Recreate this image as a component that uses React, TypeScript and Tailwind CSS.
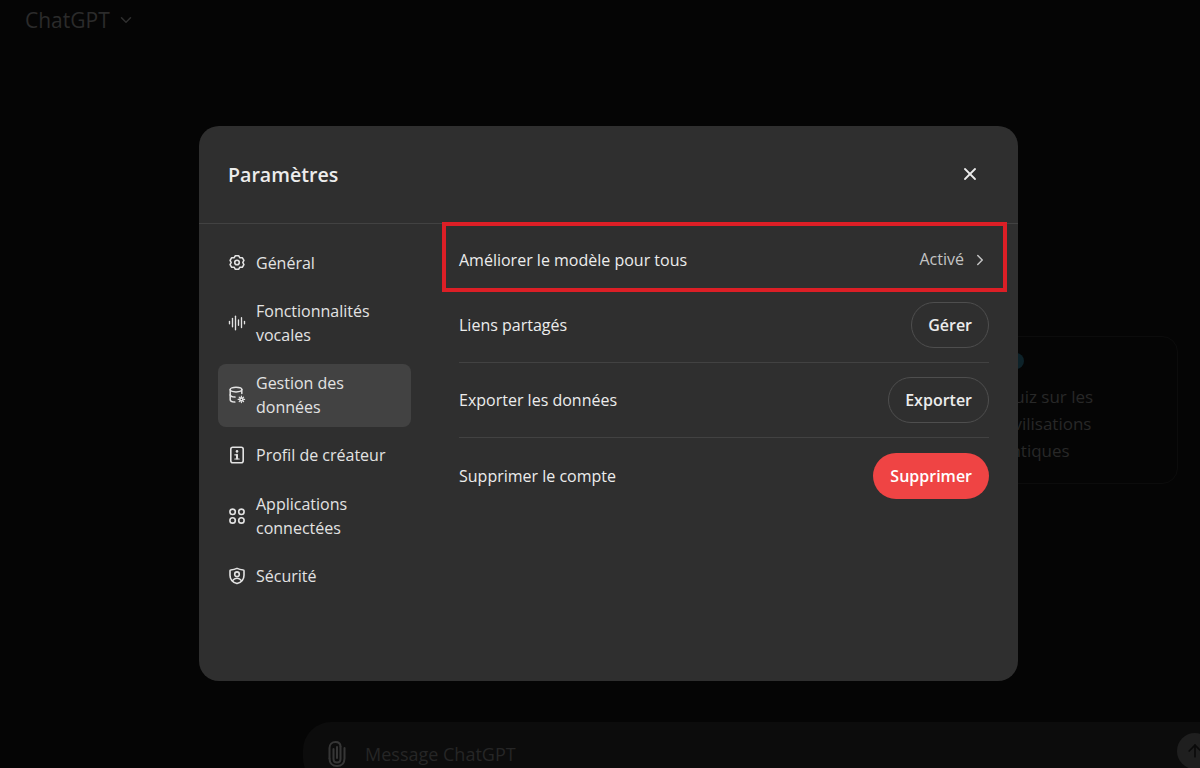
import React from "react";
import { ChevronDown, ChevronRight, ArrowUp, X, AudioLines } from "lucide-react";

const GearIcon = () => (
  <svg width="18" height="18" viewBox="0 0 18 18" fill="none" stroke="currentColor" strokeWidth="1.6" strokeLinejoin="round">
    <path d="M7.4 1.700h3.200l1.300 2.100 2.400-.100 1.600 2.700-1.100 2.100 1.100 2.100-1.600 2.700-2.400-.100-1.300 2.100H7.400l-1.300-2.100-2.400.100-1.600-2.700L3.200 8.500 2.100 6.400l1.600-2.700 2.400.100z" />
    <circle cx="9" cy="8.500" r="2.300" />
  </svg>
);

const DataIcon = () => (
  <svg width="18" height="18" viewBox="0 0 18 18" fill="none" stroke="currentColor" strokeWidth="1.5" strokeLinecap="round">
    <ellipse cx="8" cy="3.600" rx="5.800" ry="2.300" />
    <path d="M2.200 3.600v10.200c0 1.300 2 2.200 4.600 2.300" />
    <path d="M13.800 3.600v4" />
    <path d="M2.200 8.800c0 1.200 2 2.200 4.800 2.300" />
    <circle cx="13.400" cy="13.400" r="2.300" fill="currentColor" stroke="none" />
    <path d="M13.400 10.200v.8M13.400 15.800v.8M10.200 13.400h.8M15.800 13.400h.8M11.200 11.200l.5.5M15.100 15.100l.5.5M15.600 11.200l-.5.5M11.700 15.100l-.5.5" strokeWidth="1.200" />
    <circle cx="13.400" cy="13.400" r="0.700" fill="#424242" stroke="none" />
  </svg>
);

const ProfileIcon = () => (
  <svg width="18" height="18" viewBox="0 0 18 18" fill="none" stroke="currentColor" strokeWidth="1.600" strokeLinecap="round">
    <rect x="2.800" y="1.200" width="12.400" height="15.600" rx="2" />
    <circle cx="9" cy="5.400" r="1.300" fill="currentColor" stroke="none" />
    <path d="M9 8.800v3.800" strokeWidth="2" />
    <path d="M6.800 8.800h1.600M6.800 13h4.400" strokeWidth="1.200" />
  </svg>
);

const AppsIcon = () => (
  <svg width="18" height="18" viewBox="0 0 18 18" fill="none" stroke="currentColor" strokeWidth="1.600">
    <circle cx="4.600" cy="4.800" r="2.700" />
    <circle cx="13.400" cy="4.800" r="2.700" />
    <circle cx="4.600" cy="13.400" r="2.700" />
    <circle cx="13.400" cy="13.400" r="2.700" />
  </svg>
);

const ShieldIcon = () => (
  <svg width="18" height="18" viewBox="0 0 18 18" fill="none" stroke="currentColor" strokeWidth="1.600" strokeLinecap="round">
    <path d="M9 1.400c2 1 4 1.400 6.400 1.600.4 0 .6.300.6.700v4.600c0 4.200-3 7.200-7 8.300-4-1.100-7-4.100-7-8.300V3.700c0-.4.200-.7.600-.7C5 2.800 7 2.400 9 1.400z" />
    <circle cx="9" cy="7.200" r="2.300" />
    <path d="M4.800 13.400c1-1.500 2.500-2.200 4.200-2.200s3.200.7 4.200 2.200" />
  </svg>
);

const ClipIcon = () => (
  <svg width="18" height="26" viewBox="0 0 18 26" fill="none" stroke="currentColor" strokeWidth="2" strokeLinecap="round" className="text-[#363636]">
    <path d="M5.500 8v10c0 2 1.500 3.500 3.500 3.500s3.500-1.500 3.500-3.500V5.500" />
    <path d="M1.500 17.500c0 4.500 3 7.500 7.500 7.500s7.500-3 7.500-7.500V7" />
    <path d="M1.500 17.500V7c0-3.500 2.500-6 6-6s5 2 5 4.500" />
    <path d="M9 6v11" />
  </svg>
);

const navItems = [
  { label: ["Général"], icon: <GearIcon /> },
  { label: ["Fonctionnalités", "vocales"], icon: <AudioLines size={18} strokeWidth={1.8} /> },
  { label: ["Gestion des", "données"], icon: <DataIcon />, active: true },
  { label: ["Profil de créateur"], icon: <ProfileIcon /> },
  { label: ["Applications", "connectées"], icon: <AppsIcon /> },
  { label: ["Sécurité"], icon: <ShieldIcon /> },
];

const Row = ({ label, border, children }: { label: string; border?: boolean; children: React.ReactNode }) => (
  <div className={`flex items-center justify-between h-[75px] ${border ? "border-b border-[#424242]" : ""}`}>
    <span className="text-[#ececec]">{label}</span>
    {children}
  </div>
);

const App = () => {
  return (
    <div className="relative w-[1200px] h-[768px] overflow-hidden bg-[#050505] font-['Open_Sans',sans-serif] text-[16px] leading-6">
      {/* page behind the overlay */}
      <div className="flex h-full flex-col">
        <header className="flex items-center gap-[7px] pl-[25px] pt-[8px] text-[21px] font-medium text-[#2b2b2b]">
          ChatGPT
          <ChevronDown size={18} className="text-[#2f2f2f]" />
        </header>
        <div className="flex flex-1 justify-end pr-[22px] pt-[304px]">
          <div className="h-[148px] w-[270px] rounded-2xl border border-[#0c0c0c] pl-[92px] pt-[16px] text-[17px] leading-[27px] text-[#282828]">
            <div className="mb-[13.500px] ml-[7px] h-4 w-4 rounded-full bg-[#0d2229]" />
            <p>Quiz sur les</p>
            <p>civilisations</p>
            <p>antiques</p>
          </div>
        </div>
        <div className="mb-[-18px] ml-[303px] flex h-[64px] w-[924px] items-center rounded-[28px] bg-[#0c0c0c] pl-[25px] pr-[14px] text-[18px] text-[#262626]">
          <ClipIcon />
          <span className="ml-[19px] flex-1">Message ChatGPT</span>
          <span className="mb-[6px] flex h-9 w-9 items-center justify-center rounded-full bg-[#1f1f1f] text-[#0a0a0a]">
            <ArrowUp size={20} />
          </span>
        </div>
      </div>

      {/* settings dialog */}
      <div className="absolute left-[199px] top-[126px] flex h-[555px] w-[819px] flex-col rounded-[20px] bg-[#2f2f2f]">
        <div className="flex h-[98px] shrink-0 items-center justify-between border-b border-[#424242] pl-[29px] pr-[38px]">
          <h2 className="text-[19.600px] font-semibold text-[#ececec]">Paramètres</h2>
          <X size={20} strokeWidth={2.200} className="mb-[2px] text-[#ececec]" />
        </div>
        <div className="flex flex-1 pl-[19px] pr-[29px]">
          <nav className="flex w-[193px] shrink-0 flex-col gap-[9.250px] pt-[19px]">
            {navItems.map((item) => (
              <div
                key={item.label[0]}
                className={`flex items-center gap-[10px] rounded-lg px-[10px] py-[7.500px] text-[#e3e3e3] ${item.active ? "bg-[#424242]" : ""}`}
              >
                <span className="flex w-[18px] shrink-0 justify-center">{item.icon}</span>
                <span>
                  {item.label.map((l) => (
                    <span key={l} className="block">
                      {l}
                    </span>
                  ))}
                </span>
              </div>
            ))}
          </nav>
          <div className="ml-[48px] flex-1">
            <div className="relative flex h-[64px] items-center justify-between pt-[8px]">
              <span className="text-[#ececec]">Améliorer le modèle pour tous</span>
              <span className="flex items-center gap-[7px] text-[#c4c4c4]">
                <span className="mb-[2px]">Activé</span>
                <ChevronRight size={18} />
              </span>
              <div className="absolute -left-[17px] -right-[18px] -top-[2px] h-[70px] border-4 border-[#dc1f26]" />
            </div>
            <Row label="Liens partagés" border>
              <button className="h-[46px] rounded-full border border-[#4e4e4e] px-[16px] font-semibold text-[#ececec]">Gérer</button>
            </Row>
            <Row label="Exporter les données" border>
              <button className="h-[46px] rounded-full border border-[#4e4e4e] px-[16px] font-semibold text-[#ececec]">Exporter</button>
            </Row>
            <Row label="Supprimer le compte">
              <button className="h-[46px] rounded-full bg-[#ef4444] px-[17px] font-semibold text-white">Supprimer</button>
            </Row>
          </div>
        </div>
      </div>
    </div>
  );
};

export default App;
